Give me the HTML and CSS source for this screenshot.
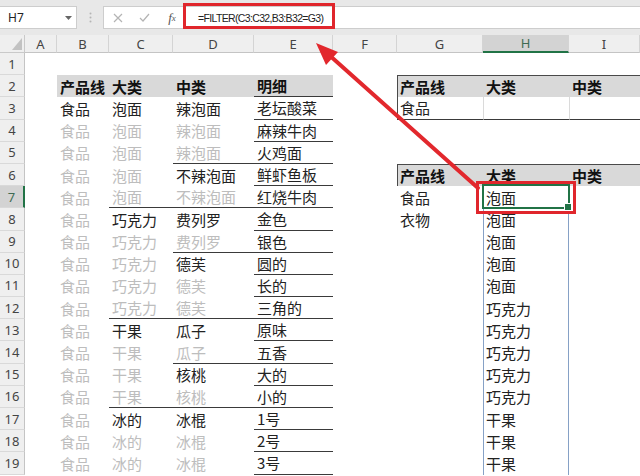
FILE: index.html
```html
<!DOCTYPE html>
<html lang="zh-CN">
<head>
<meta charset="utf-8">
<title>FILTER</title>
<link rel="stylesheet" href="styles.css">
</head>
<body>
<div class="app">
  <div class="fbar">
    <div class="namebox"><span>H7</span><svg class="caret" width="7" height="4" viewBox="0 0 7 4"><path d="M0 0H7L3.5 4Z" fill="#666"/></svg></div>
    <div class="grip"><svg width="3" height="11" viewBox="0 0 3 11"><circle cx="1.5" cy="1.5" r="1" fill="#b5b5b5"/><circle cx="1.5" cy="5.5" r="1" fill="#b5b5b5"/><circle cx="1.5" cy="9.5" r="1" fill="#b5b5b5"/></svg></div>
    <div class="finput">
      <span class="ic"><svg width="10" height="10" viewBox="0 0 10 10"><path d="M1 1L9 9M9 1L1 9" stroke="#b4b4b4" stroke-width="1.2" fill="none"/></svg></span>
      <span class="ic"><svg width="11" height="9" viewBox="0 0 11 9"><path d="M1 5L4 8L10 1" stroke="#b4b4b4" stroke-width="1.2" fill="none"/></svg></span>
      <span class="ic fx">f<sub>x</sub></span>
      <span class="ftext">=FILTER(C3:C32,B3:B32=G3)</span>
    </div>
  </div>
  <div class="sheet">
    <div class="corner"></div><div class="ch">A</div><div class="ch">B</div><div class="ch">C</div><div class="ch">D</div><div class="ch">E</div><div class="ch">F</div><div class="ch">G</div><div class="ch sel">H</div><div class="ch">I</div>

    <div class="rh">1</div><div class="c"></div><div class="c"></div><div class="c"></div><div class="c"></div><div class="c"></div><div class="c"></div><div class="c"></div><div class="c"></div><div class="c"></div>

    <div class="rh">2</div><div class="c"></div><div class="c band b">产品线</div><div class="c band b">大类</div><div class="c band b">中类</div><div class="c band b bb">明细</div><div class="c"></div><div class="c band b bt bl">产品线</div><div class="c band b bt">大类</div><div class="c band b bt">中类</div>

    <div class="rh">3</div><div class="c"></div><div class="c">食品</div><div class="c">泡面</div><div class="c">辣泡面</div><div class="c bb">老坛酸菜</div><div class="c"></div><div class="c bb bl">食品</div><div class="c bb lite"></div><div class="c bb lite"></div>

    <div class="rh">4</div><div class="c"></div><div class="c g">食品</div><div class="c g">泡面</div><div class="c g">辣泡面</div><div class="c bb">麻辣牛肉</div><div class="c"></div><div class="c"></div><div class="c"></div><div class="c"></div>

    <div class="rh">5</div><div class="c"></div><div class="c g">食品</div><div class="c g">泡面</div><div class="c g bb">辣泡面</div><div class="c bb">火鸡面</div><div class="c"></div><div class="c"></div><div class="c"></div><div class="c"></div>

    <div class="rh">6</div><div class="c"></div><div class="c g">食品</div><div class="c g">泡面</div><div class="c">不辣泡面</div><div class="c bb">鲜虾鱼板</div><div class="c"></div><div class="c band b bt bl">产品线</div><div class="c band b bt">大类</div><div class="c band b bt">中类</div>

    <div class="rh sel">7</div><div class="c"></div><div class="c g">食品</div><div class="c g bb">泡面</div><div class="c g bb">不辣泡面</div><div class="c bb">红烧牛肉</div><div class="c"></div><div class="c">食品</div><div class="c spill act">泡面</div><div class="c"></div>

    <div class="rh">8</div><div class="c"></div><div class="c g">食品</div><div class="c">巧克力</div><div class="c">费列罗</div><div class="c bb">金色</div><div class="c"></div><div class="c">衣物</div><div class="c spill">泡面</div><div class="c"></div>

    <div class="rh">9</div><div class="c"></div><div class="c g">食品</div><div class="c g">巧克力</div><div class="c g bb">费列罗</div><div class="c bb">银色</div><div class="c"></div><div class="c"></div><div class="c spill">泡面</div><div class="c"></div>

    <div class="rh">10</div><div class="c"></div><div class="c g">食品</div><div class="c g">巧克力</div><div class="c">德芙</div><div class="c bb">圆的</div><div class="c"></div><div class="c"></div><div class="c spill">泡面</div><div class="c"></div>

    <div class="rh">11</div><div class="c"></div><div class="c g">食品</div><div class="c g">巧克力</div><div class="c g">德芙</div><div class="c bb">长的</div><div class="c"></div><div class="c"></div><div class="c spill">泡面</div><div class="c"></div>

    <div class="rh">12</div><div class="c"></div><div class="c g">食品</div><div class="c g bb">巧克力</div><div class="c g bb">德芙</div><div class="c bb">三角的</div><div class="c"></div><div class="c"></div><div class="c spill">巧克力</div><div class="c"></div>

    <div class="rh">13</div><div class="c"></div><div class="c g">食品</div><div class="c">干果</div><div class="c">瓜子</div><div class="c bb">原味</div><div class="c"></div><div class="c"></div><div class="c spill">巧克力</div><div class="c"></div>

    <div class="rh">14</div><div class="c"></div><div class="c g">食品</div><div class="c g">干果</div><div class="c g bb">瓜子</div><div class="c bb">五香</div><div class="c"></div><div class="c"></div><div class="c spill">巧克力</div><div class="c"></div>

    <div class="rh">15</div><div class="c"></div><div class="c g">食品</div><div class="c g">干果</div><div class="c">核桃</div><div class="c bb">大的</div><div class="c"></div><div class="c"></div><div class="c spill">巧克力</div><div class="c"></div>

    <div class="rh">16</div><div class="c"></div><div class="c g">食品</div><div class="c g bb">干果</div><div class="c g bb">核桃</div><div class="c bb">小的</div><div class="c"></div><div class="c"></div><div class="c spill">巧克力</div><div class="c"></div>

    <div class="rh">17</div><div class="c"></div><div class="c g">食品</div><div class="c">冰的</div><div class="c">冰棍</div><div class="c bb">1号</div><div class="c"></div><div class="c"></div><div class="c spill">干果</div><div class="c"></div>

    <div class="rh">18</div><div class="c"></div><div class="c g">食品</div><div class="c g">冰的</div><div class="c g">冰棍</div><div class="c bb">2号</div><div class="c"></div><div class="c"></div><div class="c spill">干果</div><div class="c"></div>

    <div class="rh">19</div><div class="c"></div><div class="c g">食品</div><div class="c g">冰的</div><div class="c g">冰棍</div><div class="c bb">3号</div><div class="c"></div><div class="c"></div><div class="c spill">干果</div><div class="c"></div>
  </div>

  <div class="mark mark-formula"></div>
  <div class="mark mark-cell"></div>
  <svg class="arrow" width="640" height="476" viewBox="0 0 640 476">
    <path d="M478 188L328 54" stroke="#e2282d" stroke-width="4" stroke-linecap="round" fill="none"/>
    <path d="M316 43L338 52L326 65Z" fill="#e2282d"/>
  </svg>
</div>
</body>
</html>
```

FILE: styles.css
```css
* { box-sizing: border-box; margin: 0; padding: 0; }

html, body {
  width: 640px;
  height: 476px;
  overflow: hidden;
  background: #fff;
}

body {
  font-family: "Noto Sans CJK SC", "Noto Sans", sans-serif;
  color: #222;
}

.app {
  position: relative;
  width: 640px;
  height: 476px;
  display: flex;
  flex-direction: column;
}

/* formula bar */
.fbar {
  flex: none;
  height: 35px;
  background: #e8e8e8;
  display: flex;
  align-items: flex-start;
  padding-top: 6px;
}

.namebox {
  width: 78px;
  height: 23px;
  margin-left: -1px;
  background: #fff;
  border: 1px solid #cdcdcd;
  display: flex;
  align-items: center;
  justify-content: space-between;
  padding: 0 4px 0 8px;
  font: 12px "Noto Sans", sans-serif;
  color: #222;
}

.grip {
  width: 26px;
  height: 23px;
  display: flex;
  align-items: center;
  justify-content: center;
}

.finput {
  flex: 1;
  height: 23px;
  background: #fff;
  border: 1px solid #cdcdcd;
  border-right: none;
  display: flex;
  align-items: center;
}

.ic {
  width: 27px;
  height: 21px;
  display: flex;
  align-items: center;
  justify-content: center;
}

.fx {
  width: 28px;
  font: italic 13px "Liberation Serif", serif;
  color: #555;
}

.fx sub {
  font-size: 9px;
  vertical-align: -2px;
}

.ftext {
  margin-left: 12px;
  font: 10.5px "Liberation Sans", sans-serif;
  letter-spacing: -0.65px;
  color: #222;
}

/* sheet grid */
.sheet {
  flex: 1;
  display: grid;
  grid-template-columns: 25px 32px 52px 64px 81px 79px 64px 86px 86px 71px;
  grid-template-rows: 18px repeat(19, 22.2px);
}

.corner {
  position: relative;
  background: #efefef;
  border-right: 1px solid #c9c9c9;
  border-bottom: 1px solid #c9c9c9;
}

.corner::after {
  content: "";
  position: absolute;
  right: 2px;
  bottom: 2px;
  width: 10px;
  height: 12px;
  background: #c2c2c2;
  clip-path: polygon(100% 0, 100% 100%, 0 100%);
}

.ch {
  background: #efefef;
  border-right: 1px solid #d4d4d4;
  border-bottom: 1px solid #c4c4c4;
  display: flex;
  align-items: center;
  justify-content: center;
  font: 13px "Noto Sans", sans-serif;
  color: #444;
}

.ch.sel {
  background: #d3d3d3;
  border-bottom: 2px solid #217346;
  color: #3f6b52;
}

.rh {
  background: #efefef;
  border-right: 1px solid #c4c4c4;
  border-bottom: 1px solid #d9d9d9;
  display: flex;
  align-items: center;
  justify-content: center;
  font: 13px "Noto Sans", sans-serif;
  color: #444;
}

.rh.sel {
  background: #d3d3d3;
  border-right: 2px solid #217346;
  color: #3f6b52;
}

.c {
  display: flex;
  align-items: center;
  padding-left: 3px;
  font-size: 15px;
  white-space: nowrap;
  color: #222;
}

.g { color: #bdbdbd; }
.b { font-weight: 700; color: #111; }
.band { background: #d9d9d9; }
.bb { border-bottom: 1px solid #3a3a3a; }
.bt { border-top: 1px solid #4a4a4a; }
.bl { border-left: 1px solid #4a4a4a; padding-left: 2px; }
.lite { border-left: 1px solid #dadada; }

.spill {
  border-left: 1px solid #86a1c6;
  border-right: 1px solid #86a1c6;
  padding-left: 2px;
}

.act { position: relative; }

.act::after {
  content: "";
  position: absolute;
  left: -2px;
  top: -2px;
  right: -2px;
  bottom: -1px;
  border: 2px solid #217346;
}

.act::before {
  content: "";
  position: absolute;
  right: -4px;
  bottom: -3px;
  width: 6px;
  height: 6px;
  background: #217346;
  border: 1px solid #fff;
  z-index: 1;
}

/* annotations */
.mark {
  position: absolute;
  border: 3px solid #e0262c;
}

.mark-formula {
  left: 183px;
  top: 3px;
  width: 152px;
  height: 26px;
}

.mark-cell {
  left: 476px;
  top: 181px;
  width: 100px;
  height: 33px;
}

.arrow {
  position: absolute;
  left: 0;
  top: 0;
  pointer-events: none;
}
```
